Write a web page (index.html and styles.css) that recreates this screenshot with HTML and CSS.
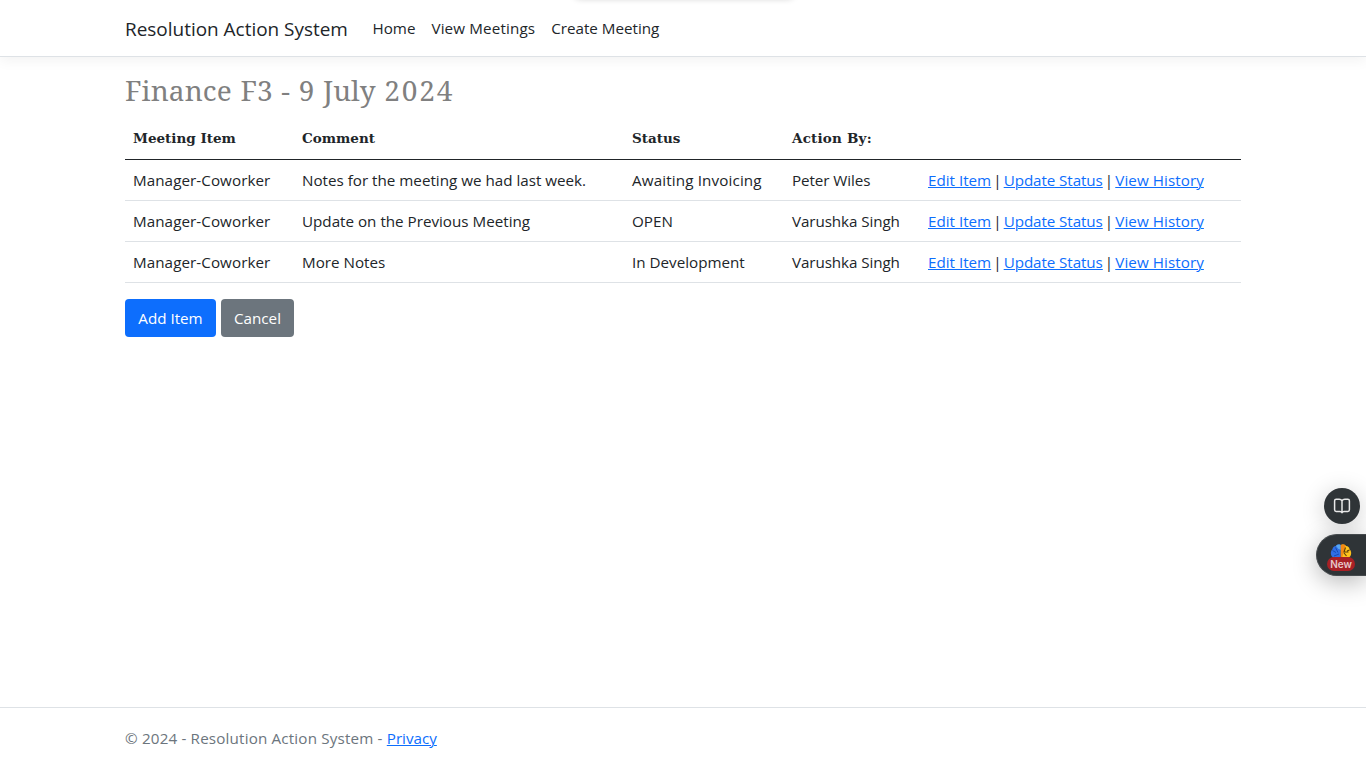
FILE: index.html
```html
<!DOCTYPE html>
<html lang="en">
<head>
<meta charset="utf-8">
<title>Resolution Action System</title>
<link rel="stylesheet" href="styles.css">
</head>
<body>
<div class="top-tab"></div>
<header class="navbar">
  <nav class="container nav-row">
    <a class="brand" href="#">Resolution Action System</a>
    <a class="nav-link" href="#">Home</a>
    <a class="nav-link wide" href="#">View Meetings</a>
    <a class="nav-link" href="#">Create Meeting</a>
  </nav>
</header>
<main class="container main">
  <h1 class="title">Finance F3 - 9 July <span class="year">2024</span></h1>
  <table class="table">
    <colgroup><col class="c-item"><col class="c-comment"><col class="c-status"><col class="c-by"><col></colgroup>
    <thead>
      <tr><th>Meeting Item</th><th>Comment</th><th>Status</th><th class="item">Action By:</th><th></th></tr>
    </thead>
    <tbody>
      <tr><td class="item">Manager-Coworker</td><td>Notes for the meeting we had last week.</td><td class="wide">Awaiting Invoicing</td><td class="tight">Peter Wiles</td>
        <td><div class="links"><a href="#">Edit Item</a><span class="sep">|</span><a class="tight" href="#">Update Status</a><span class="sep">|</span><a class="item" href="#">View History</a></div></td></tr>
      <tr><td class="item">Manager-Coworker</td><td>Update on the Previous Meeting</td><td>OPEN</td><td class="tight">Varushka Singh</td>
        <td><div class="links"><a href="#">Edit Item</a><span class="sep">|</span><a class="tight" href="#">Update Status</a><span class="sep">|</span><a class="item" href="#">View History</a></div></td></tr>
      <tr><td class="item">Manager-Coworker</td><td>More Notes</td><td>In Development</td><td class="tight">Varushka Singh</td>
        <td><div class="links"><a href="#">Edit Item</a><span class="sep">|</span><a class="tight" href="#">Update Status</a><span class="sep">|</span><a class="item" href="#">View History</a></div></td></tr>
    </tbody>
  </table>
  <div class="actions">
    <a class="btn primary" href="#">Add Item</a>
    <a class="btn secondary" href="#">Cancel</a>
  </div>
</main>
<footer class="footer">
  <div class="container"><span class="copy">© 2024 - Resolution Action System - </span><a href="#">Privacy</a></div>
</footer>
<div class="reader">
  <svg width="18" height="18" viewBox="0 0 18 18" fill="none" stroke="#e8e8e8" stroke-width="1.5" stroke-linejoin="round" stroke-linecap="round"><path d="M9 3.8C8.4 2.7 7.5 2.2 6.200 2.200H3.200c-1 0-1.600.6-1.600 1.600v9c0 1 .6 1.600 1.600 1.600H7c1 0 1.600.4 2 1.200.4-.8 1-1.200 2-1.200h3.800c1 0 1.600-.6 1.600-1.600v-9c0-1-.6-1.600-1.600-1.600h-3c-1.300 0-2.200.5-2.800 1.600v12"/></svg>
</div>
<div class="assistant">
  <svg class="brain" width="22" height="16" viewBox="0 0 22 16">
    <path d="M10.700 1C9 .2 7 .7 6 2 4 2 2.500 3.400 2.500 5.200 1 6.500.5 8.500 1 10.500c.5 2 2 3.500 4 3.500h5.700z" fill="#2f6fe4"/>
    <path d="M6 2c1-1.300 3-1.800 4.700-1v5L8 4.500z" fill="#57a7f2"/>
    <path d="M2.500 6.500 6 8.500M5.500 3.500 8 8.500M4 12l5-2" stroke="#174bb4" fill="none"/>
    <path d="M11.300 1c1.700-.8 3.700-.3 4.700 1 2 0 3.500 1.400 3.500 3.200 1.500 1.300 2 3.300 1.500 5.300-.5 2-2 3.500-4 3.500h-5.700z" fill="#ffc21c"/>
    <path d="M10.700 1c1.700-.8 3.800-.4 4.800.6L14 7l-2 7h-1.300z" fill="#f58a13"/>
    <path d="M15.500 3.500 14 8h4.500M19.500 6l-2.500 1M14 9l2.500 3" stroke="#5c3b08" fill="none" stroke-width="1.100"/>
  </svg>
  <span class="new">New</span>
</div>
</body>
</html>
```
FILE: styles.css
```css
* { box-sizing: border-box; }
body {
  margin: 0;
  height: 768px;
  display: flex;
  flex-direction: column;
  overflow: hidden;
  background: #fff;
  color: #212529;
  font: 400 15.2px/24px "Open Sans", "Noto Sans", sans-serif;
}
a { color: #0d6efd; text-underline-offset: 1px; text-decoration-thickness: 1px; }
.container { width: 1140px; margin: 0 auto; padding: 0 12px; }
.top-tab {
  position: absolute;
  top: -20px;
  left: 573px;
  width: 222px;
  height: 19px;
  border-radius: 8px;
  box-shadow: 0 0 6px rgba(0, 0, 0, .18);
}
.navbar {
  height: 57px;
  border-bottom: 1px solid #dee2e6;
  box-shadow: 0 4px 12px rgba(0, 0, 0, .05);
}
.nav-row { display: flex; align-items: center; height: 56px; }
.brand { width: 247.5px; padding-top: 2px; font-size: 18.95px; line-height: 30px; color: #212529; text-decoration: none; }
.nav-link { margin-right: 16px; color: #212529; text-decoration: none; }
.wide { letter-spacing: .14px; }
.item { letter-spacing: .07px; }
.tight { letter-spacing: -.08px; }
.main { flex: 1; padding-top: 14px; }
.title {
  margin: 0 0 9px;
  font: 400 28px/38px "Noto Serif", "DejaVu Serif Condensed", serif;
  letter-spacing: .1px;
  word-spacing: 1.2px;
  color: #808080;
}
.year { letter-spacing: 1.8px; }
.table { width: 1116px; table-layout: fixed; border-collapse: separate; border-spacing: 0; margin-bottom: 16px; }
.c-item { width: 169px; }
.c-comment { width: 330px; }
.c-status { width: 160px; }
.c-by { width: 136px; }
th, td { height: 41px; padding: 8px; text-align: left; border-bottom: 1px solid #dee2e6; }
th {
  height: 42px;
  padding: 7px 8px 9px;
  font: 700 13.5px/24px "DejaVu Serif", serif;
  border-bottom-color: #212529;
}
th.item { letter-spacing: .2px; }
.links { display: flex; }
.sep { width: 12.5px; text-align: center; }
.actions { display: flex; gap: 5px; }
.btn { height: 38px; padding: 7px 0; border-radius: 4px; color: #fff; text-align: center; text-decoration: none; }
.primary { width: 91px; background: #0d6efd; }
.secondary { width: 73px; background: #6c757d; }
.footer { height: 61px; border-top: 1px solid #dee2e6; line-height: 61px; color: #6c757d; }
.copy { letter-spacing: .17px; white-space: pre; }
.reader, .assistant { position: absolute; background: #2f3437; }
.reader {
  left: 1324px;
  top: 488px;
  width: 36px;
  height: 36px;
  border-radius: 50%;
  display: grid;
  place-items: center;
  box-shadow: 0 4px 24px rgba(0, 0, 0, .2);
}
.assistant {
  left: 1316px;
  top: 534px;
  width: 50px;
  height: 42px;
  border-radius: 21px 0 0 21px;
  border: 1px solid #454a4d;
  border-right: 0;
  padding: 9px 0 0 10px;
  display: flex;
  flex-direction: column;
  box-shadow: 0 6px 24px rgba(0, 0, 0, .28);
}
.brain { margin-left: 3px; }
.new {
  width: 28px;
  height: 14px;
  margin-top: -3px;
  border-radius: 7px;
  background: #a82025;
  color: #e6c8c8;
  font: 600 10px/15px Inter, sans-serif;
  text-align: center;
  z-index: 1;
}
```
